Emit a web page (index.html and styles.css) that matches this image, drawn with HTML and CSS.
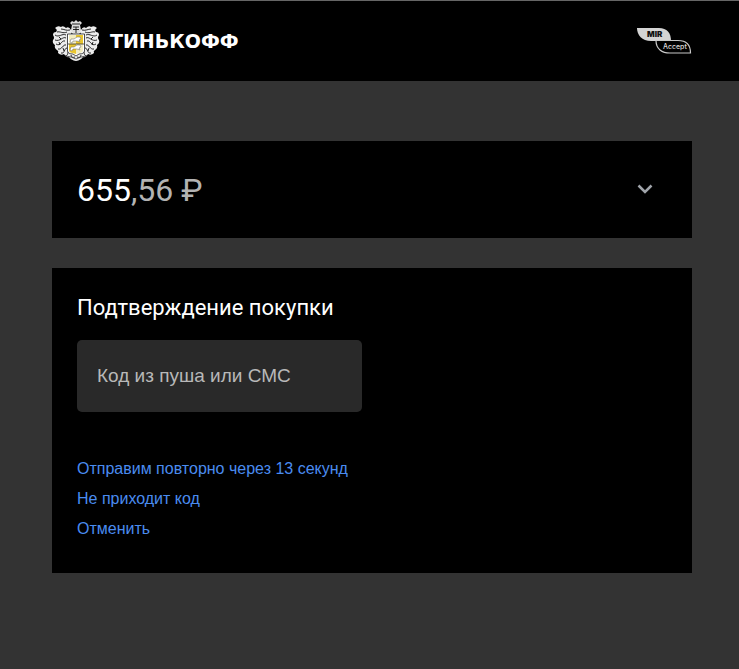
FILE: index.html
```html
<!DOCTYPE html>
<html lang="ru">
<head>
<meta charset="utf-8">
<meta name="viewport" content="width=device-width, initial-scale=1">
<title>Подтверждение покупки</title>
<link rel="stylesheet" href="styles.css">
</head>
<body>
<header class="header">
  <div class="brand">
    <svg class="crest" viewBox="0 0 48 42" aria-hidden="true">
      <defs>
        <g id="mantle">
          <path fill="#ececec" d="M24 10 19 10Q17 6 14 8 11 5 9 7 6 5 3 8 6 10 4 12 1 12 1 15 3 18 1 20 0 23 3 25 2 28 5 30 7 31 6 33 9 36 12 34 14 38 17 37 19 40 24 41Z"/>
          <path fill="none" stroke="#111" stroke-width=".9" d="M18 10C14 11 12 9 9 9M15 12C11 14 8 11 5 12M14 15C10 13 7 18 3 15M14 18C11 16 8 22 3 20M13 21C9 20 9 27 4 24M14 25C11 24 10 30 6 29M15 28C12 28 13 34 9 33M17 31C15 31 17 36 13 36M19 35C19 37 21 38 23 37M7 17 9 19M7 22 8 25M11 28 12 31"/>
        </g>
      </defs>
      <use href="#mantle"/>
      <use href="#mantle" transform="matrix(-1 0 0 1 48 0)"/>
      <path fill="#ddd" d="M18 3 20 1 22 2 24 0 26 2 28 1 30 3 28 5 29 10 26 14H22L19 10 20 5Z"/>
      <path fill="none" stroke="#111" stroke-width=".9" d="M20 4H28M21 7H27M21 9.500H27M24 7V13M19 13 22 15H26L29 13"/>
      <path fill="#fff" stroke="#222" stroke-width=".8" d="M15.500 14H32.500V31Q32 34 27 34L24 36 21 34Q16 34 15.500 31Z"/>
      <path fill="#f3ecc0" d="M17 15H24V24H17Z"/>
      <path fill="#e9c62e" d="M17 24H24V34L21 33Q17 33 17 30Z"/>
      <path fill="#e9c62e" d="M24 15H31V24H24Z"/>
      <path fill="#f3ecc0" d="M24 24H31V30Q31 33 27 33L24 34Z"/>
      <path fill="#fff" stroke="#666" stroke-width=".5" d="M18 22 19 19 22 19 25 17 28 17 29 19 27 20 28 22 25 21 21 21 20 23ZM18 30 19 27 22 27 25 25 28 25 29 27 27 28 28 30 25 29 21 29 20 31Z"/>
      <path fill="none" stroke="#333" stroke-width=".8" d="M16 24H32M14 36 19 37 24 39 29 37 34 36"/>
    </svg>
    <span class="wordmark">ТИНЬКОФФ</span>
  </div>
  <svg class="mir" viewBox="0 0 56 28" role="img" aria-label="MIR Accept">
    <path fill="#d4d4d4" d="M1 1H23C31 1 35 6 35 14H15C6 14 1 8 1 1Z"/>
    <path fill="none" stroke="#c8c8c8" stroke-width="1.200" d="M20 13.500H42C50 13.500 54.500 18 54.500 26H34C26 26 20 22 20 13.500Z"/>
    <text class="mir-name" x="11" y="10">MIR</text>
    <text class="mir-accept" x="27" y="22">Accept</text>
  </svg>
</header>
<main class="content">
  <section class="card amount-card">
    <p class="amount">655<span class="fraction">,56 ₽</span></p>
    <button class="toggle" type="button" aria-label="Подробности">
      <svg class="chevron" viewBox="0 0 16 12" aria-hidden="true"><path d="M1.500 1.500 8 8 14.500 1.500"/></svg>
    </button>
  </section>
  <section class="card confirm-card">
    <h1 class="title">Подтверждение покупки</h1>
    <input class="code" type="text" inputmode="numeric" placeholder="Код из пуша или СМС" aria-label="Код из пуша или СМС">
    <nav class="links">
      <a href="#">Отправим повторно через 13 секунд</a>
      <a href="#">Не приходит код</a>
      <a href="#">Отменить</a>
    </nav>
  </section>
</main>
</body>
</html>
```
FILE: styles.css
```css
* {
  box-sizing: border-box;
}

body {
  margin: 0;
  min-height: 100vh;
  background: #333;
  color: #fff;
  font-family: Roboto, sans-serif;
}

.header {
  display: flex;
  align-items: center;
  justify-content: space-between;
  height: 81px;
  padding: 0 47px 0 52px;
  border-top: 1px solid #666;
  background: #000;
}

.brand {
  display: flex;
  align-items: center;
  gap: 10px;
}

.crest {
  width: 48px;
  height: 42px;
}

.wordmark {
  font: bold 19px/24px "DejaVu Sans", sans-serif;
}

.mir {
  width: 56px;
  height: 28px;
}

.mir-name {
  fill: #111;
  font: 900 8px Inter, sans-serif;
}

.mir-accept {
  fill: #ddd;
  font: 500 7px Inter, sans-serif;
}

.content {
  display: grid;
  gap: 30px;
  padding: 60px 47px 60px 52px;
}

.card {
  background: #000;
  padding: 25px;
}

.amount-card {
  display: flex;
  align-items: center;
  justify-content: space-between;
  min-height: 97px;
}

.amount {
  margin: 0;
  font-size: 32px;
  line-height: 40px;
}

.fraction {
  color: #b3b3b3;
}

.toggle {
  display: flex;
  padding: 14px;
  border: 0;
  background: none;
}

.chevron {
  width: 16px;
  height: 12px;
  fill: none;
  stroke: #a0a4aa;
  stroke-width: 2.5;
}

.title {
  margin: 0 0 18px;
  font-size: 22px;
  font-weight: 400;
  line-height: 29px;
}

.code {
  display: block;
  width: 285px;
  max-width: 100%;
  height: 72px;
  padding: 0 20px;
  border: 0;
  border-radius: 5px;
  background: #292929;
  color: #fff;
  font: 19px "Liberation Sans", sans-serif;
}

.code::placeholder {
  color: #b8b8b8;
  opacity: 1;
}

.links {
  display: flex;
  flex-direction: column;
  align-items: flex-start;
  margin-top: 42px;
  padding-bottom: 4px;
}

.links a {
  color: #4a8cf0;
  font: 16px/30px "Liberation Sans", sans-serif;
  text-decoration: none;
}
```
